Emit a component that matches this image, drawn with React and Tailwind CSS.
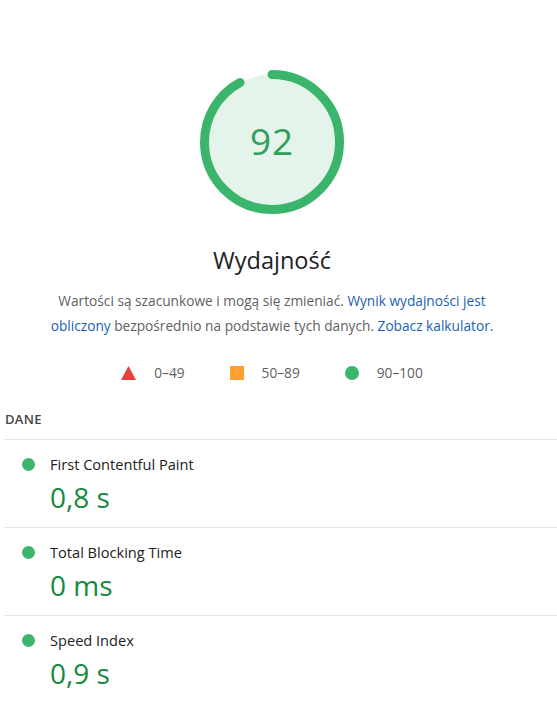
import { Fragment } from 'react'

const metrics = [
  { label: 'First Contentful Paint', value: '0,8 s' },
  { label: 'Total Blocking Time', value: '0 ms' },
  { label: 'Speed Index', value: '0,9 s' },
]

function Gauge({ score }) {
  const r = 67.5
  const c = 2 * Math.PI * r
  return (
    <div className="relative w-[144px] h-[144px]">
      <svg width="144" height="144" viewBox="0 0 144 144" className="-rotate-90">
        <circle cx="72" cy="72" r={r} fill="#e5f4ea" />
        <circle
          cx="72"
          cy="72"
          r={r}
          fill="none"
          stroke="#3bb56b"
          strokeWidth="9"
          strokeLinecap="round"
          strokeDasharray={`${(c * score) / 100} ${c}`}
        />
      </svg>
      <div className="absolute inset-0 flex items-center justify-center pb-[3px] text-[37px] font-medium text-[#2f9f5c] tracking-wide">
        {score}
      </div>
    </div>
  )
}

export default function App() {
  return (
    <div className="min-h-screen bg-white font-['Open_Sans',sans-serif] text-[#212121] pl-[4px]">
      {/* score header */}
      <div className="w-[536px] flex flex-col items-center pt-[70px]">
        <Gauge score={92} />
        <h1 className="mt-[32px] text-[23.5px] text-[#202124] leading-7">Wydajność</h1>
        <p className="mt-[14px] w-[470px] text-center text-[13.7px] leading-[25px] text-[#5f5f5f]">
          Wartości są szacunkowe i mogą się zmieniać.{' '}
          <span className="text-[#1a5fb4]">Wynik wydajności jest obliczony</span>{' '}
          bezpośrednio na podstawie tych danych.{' '}
          <span className="text-[#1a5fb4]">Zobacz kalkulator.</span>
        </p>
        <div className="mt-[25px] flex items-center text-[13.7px] text-[#5f5f5f]">
          <span className="flex items-center gap-[18px]">
            <svg width="15" height="14" viewBox="0 0 15 14">
              <polygon points="7.5,0 15,14 0,14" fill="#eb3f3f" />
            </svg>
            0–49
          </span>
          <span className="ml-[45px] flex items-center gap-[18px]">
            <span className="w-[14px] h-[14px] bg-[#ffa233]" />
            50–89
          </span>
          <span className="ml-[45px] flex items-center gap-[18px]">
            <span className="w-[14px] h-[14px] rounded-full bg-[#3bb56b]" />
            90–100
          </span>
        </div>
      </div>

      {/* metrics */}
      <div className="mt-[26px]">
        <div className="pl-px pb-[10px] text-[13px] font-semibold tracking-wide text-[#444]">DANE</div>
        {metrics.map((m) => (
          <Fragment key={m.label}>
            <div className="border-t border-[#e4e4e4] pl-[18px] pt-[14px] pb-[10px]">
              <div className="flex items-center gap-[15px] text-[14.6px] text-[#222]">
                <span className="w-[13px] h-[13px] rounded-full bg-[#3bb56b]" />
                {m.label}
              </div>
              <div className="pl-[28px] mt-[1px] text-[28px] leading-[40px] text-[#148a3c]">{m.value}</div>
            </div>
          </Fragment>
        ))}
      </div>
    </div>
  )
}
